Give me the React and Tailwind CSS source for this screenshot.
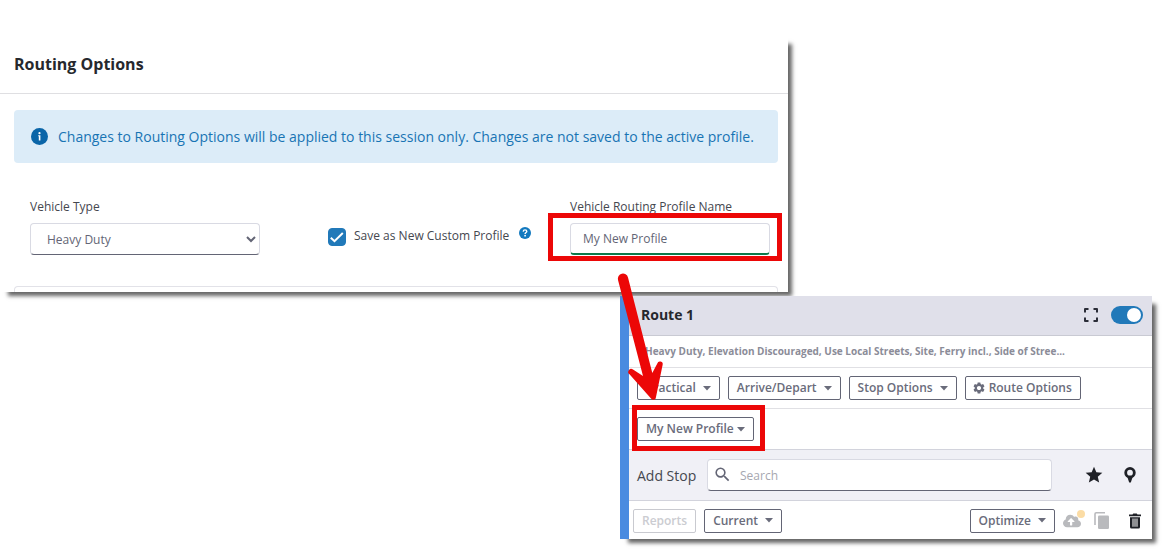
import React, { useState } from "react";
import { FaCloudUploadAlt } from "react-icons/fa";
import { MdSearch, MdSettings, MdStar } from "react-icons/md";

function OutlineButton({ children, caret, icon, disabled, tight }) {
  return (
    <button
      type="button"
      disabled={disabled}
      className={
        disabled
          ? "flex h-6 items-center rounded-xs border border-[#c9cad0] px-2 text-xs font-semibold whitespace-nowrap text-[#cbccd1]"
          : "flex h-6 items-center rounded-xs border border-[#636575] bg-white px-2 text-xs font-semibold whitespace-nowrap text-[#6a6c7b]"
      }
    >
      {icon}
      {children}
      {caret && <Caret tight={tight} />}
    </button>
  );
}

function Caret({ tight }) {
  return (
    <svg width="8" height="5" viewBox="0 0 8 5" className={tight ? "ml-[3px]" : "ml-[7px]"} aria-hidden="true">
      <path d="M0 0h8L4 4.500z" fill="currentColor" />
    </svg>
  );
}

function InfoIcon() {
  return (
    <svg width="17" height="17" viewBox="0 0 17 17" className="shrink-0" aria-hidden="true">
      <circle cx="8.5" cy="8.5" r="8.5" fill="#0a65a8" />
      <circle cx="8.5" cy="5.2" r="1.1" fill="#fff" />
      <path d="M7.200 7.200h2.200v5.300H7.800V8.300h-.6z" fill="#fff" />
    </svg>
  );
}

function HelpIcon() {
  return (
    <svg width="12" height="12" viewBox="0 0 12 12" aria-hidden="true">
      <circle cx="6" cy="6" r="6" fill="#1279bf" />
      <path d="M4.2 4.6C4.3 3.4 5 2.9 6 2.9s1.8.6 1.8 1.5C7.800 5.500 6.100 5.600 6.100 7" fill="none" stroke="#fff" strokeWidth="1.4" />
      <circle cx="6.100" cy="8.700" r=".9" fill="#fff" />
    </svg>
  );
}

function ExpandIcon() {
  return (
    <svg width="14" height="14" viewBox="0 0 14 14" fill="none" stroke="#2b2d38" strokeWidth="2" strokeLinejoin="round" aria-hidden="true">
      <path d="M1 4.500V1h3.500M9.500 1H13v3.500M13 9.500V13H9.500M4.500 13H1V9.500" />
    </svg>
  );
}

function PinIcon() {
  return (
    <svg width="12" height="16" viewBox="0 0 12 16" aria-hidden="true">
      <circle cx="6" cy="5.700" r="4.300" fill="none" stroke="#1f2127" strokeWidth="2.800" />
      <path d="M3.500 10.500h5L6.800 15.500H5.200z" fill="#1f2127" />
    </svg>
  );
}

function CopyIcon() {
  return (
    <svg width="15" height="17" viewBox="0 0 15 17" aria-hidden="true">
      <path d="M1 13V2a1.200 1.200 0 0 1 1.200-1.200H11" fill="none" stroke="#b9babd" strokeWidth="1.600" />
      <rect x="4" y="3.500" width="11" height="13.500" rx="1.300" fill="#b9babd" />
    </svg>
  );
}

function TrashIcon() {
  return (
    <svg width="12" height="16" viewBox="0 0 12 16" fill="#1f2127" aria-hidden="true">
      <path d="M0 1.500h3.500L4.300.5h3.400l.8 1H12v1.800H0z" />
      <path fillRule="evenodd" d="M1 4.200h10V14a1.500 1.500 0 0 1-1.500 1.500h-7A1.500 1.500 0 0 1 1 14zM3.500 5.500v8.300h1V5.500zM5.500 5.500v8.300h1V5.500zM7.500 5.500v8.300h1V5.500z" />
    </svg>
  );
}

// red arrow that links the profile name field with the profile button
function Arrow() {
  return (
    <svg
      width="48"
      height="132"
      viewBox="0 0 48 132"
      className="pointer-events-none absolute -top-6 -left-[9px] z-10 overflow-visible"
      aria-hidden="true"
    >
      <path
        d="M-2 8A5 5 0 0 1 8 5.500L32.300 101L37.300 91.500A2.700 2.700 0 0 1 42.600 93L36 125A2.700 2.700 0 0 1 31 126.500L9.500 102.300A2.800 2.800 0 0 1 13 97.500L23 104Z"
        fill="#ec0707"
      />
    </svg>
  );
}

function RoutingOptions() {
  const [saveProfile, setSaveProfile] = useState(true);
  const [profileName, setProfileName] = useState("My New Profile");

  return (
    <section className="w-full max-w-[788px] bg-white shadow-[6px_6px_4px_-2px_rgba(0,0,0,0.6)]">
      {/* Header */}
      <div className="border-b border-[#dfdfe2] px-3.5 pt-4 pb-[17px]">
        <h1 className="text-base leading-6 font-bold text-[#26282d]">Routing Options</h1>
      </div>

      {/* Notice */}
      <div className="mt-4 mr-2.5 ml-3.5 flex items-center gap-2.5 rounded-sm bg-[#dcecf8] px-[17px] py-4 text-sm leading-[21px] text-[#1874b4]">
        <InfoIcon />
        <p>
          Changes to Routing Options will be applied to this session only. Changes are not saved to the active profile.
        </p>
      </div>

      {/* Form */}
      <div className="mt-8 flex items-start pr-[18px] pl-[30px] text-xs text-[#45474f]">
        <div className="w-[230px]">
          <label htmlFor="vehicle-type" className="block leading-6">
            Vehicle Type
          </label>
          <select
            id="vehicle-type"
            className="mt-1 h-8 w-full rounded-sm border border-[#d9dae3] border-b-[#636575] bg-white px-3 text-[#636575]"
          >
            <option>Heavy Duty</option>
          </select>
        </div>

        <div className="mt-[26px] ml-[68px] flex h-8 items-center">
          <span className="relative flex">
            <input
              id="save-profile"
              type="checkbox"
              checked={saveProfile}
              onChange={(e) => setSaveProfile(e.target.checked)}
              className="h-[18px] w-[18px] appearance-none rounded-sm border border-[#2179b9] bg-white checked:bg-[#2179b9]"
            />
            {saveProfile && (
              <svg viewBox="0 0 18 18" className="pointer-events-none absolute inset-0" aria-hidden="true">
                <path d="M2.800 9.800l3.700 3.400L14.800 5" fill="none" stroke="#fff" strokeWidth="2" />
              </svg>
            )}
          </span>
          <label htmlFor="save-profile" className="mb-0.5 ml-2 whitespace-nowrap">
            Save as New Custom Profile
          </label>
          <button type="button" aria-label="Help" className="mb-2 ml-2.5">
            <HelpIcon />
          </button>
        </div>

        <div className="ml-auto w-[200px]">
          <label htmlFor="profile-name" className="block leading-6">
            Vehicle Routing Profile Name
          </label>
          <div className="relative mt-1">
            <input
              id="profile-name"
              type="text"
              value={profileName}
              onChange={(e) => setProfileName(e.target.value)}
              className="block h-8 w-full rounded-sm border border-b-2 border-[#d9dae3] border-b-[#0a7a4b] px-3 text-[#636575]"
            />
            <div className="pointer-events-none absolute -top-2.5 -right-3 -bottom-1.5 -left-[22px] border-5 border-[#ec0707]" />
          </div>
        </div>
      </div>

      {/* top edge of the next card */}
      <div className="mt-[31px] mr-2.5 ml-3.5 h-1.5 rounded-t-sm border border-b-0 border-[#e2e2e8]" />
    </section>
  );
}

function RoutePanel() {
  const [enabled, setEnabled] = useState(true);

  return (
    <section className="relative mt-1 mr-[15px] ml-auto w-full max-w-[532px] border-l-9 border-[#4a8be0] bg-white shadow-[6px_6px_4px_-2px_rgba(0,0,0,0.6)]">
      <Arrow />

      {/* Title */}
      <div className="flex h-10 items-center border-b border-[#c9cad3] bg-[#e0e0ea] pr-[9px] pb-px pl-3">
        <h2 className="text-sm font-bold text-[#26282d]">Route 1</h2>
        <button type="button" aria-label="Expand" className="ml-auto">
          <ExpandIcon />
        </button>
        <label className="relative ml-[13px] flex">
          <input
            type="checkbox"
            role="switch"
            aria-label="Show route"
            checked={enabled}
            onChange={(e) => setEnabled(e.target.checked)}
            className="peer h-[18px] w-8 appearance-none rounded-full bg-[#9a9ba5] checked:bg-[#2179b9]"
          />
          <span className="pointer-events-none absolute top-0.5 left-0.5 h-3.5 w-3.5 rounded-full bg-white peer-checked:left-4" />
        </label>
      </div>

      <p className="h-8 border-b border-[#e0e0e4] pl-4 text-[10px] leading-[31px] font-bold whitespace-nowrap text-[#8b8c98]">
        Heavy Duty, Elevation Discouraged, Use Local Streets, Site, Ferry incl., Side of Stree...
      </p>

      {/* Options */}
      <div className="flex h-[41px] items-center gap-2 border-b border-[#e0e0e4] px-2">
        <OutlineButton caret>Practical</OutlineButton>
        <OutlineButton caret>Arrive/Depart</OutlineButton>
        <OutlineButton caret>Stop Options</OutlineButton>
        <OutlineButton icon={<MdSettings size={14} className="-ml-0.5 mr-[3px]" />}>Route Options</OutlineButton>
      </div>

      <div className="flex h-10 items-center px-2">
        <div className="relative">
          <OutlineButton caret tight>
            My New Profile
          </OutlineButton>
          <div className="pointer-events-none absolute -top-3 -right-[11px] -bottom-2.5 -left-[5px] border-5 border-[#ec0707]" />
        </div>
      </div>

      {/* Add stop */}
      <div className="flex h-[52px] items-center border-y border-[#d2d3dc] bg-[#f0f0f6] pr-4 pl-2">
        <label htmlFor="stop-search" className="w-[70px] pt-0.5 text-sm whitespace-nowrap text-[#45474f]">
          Add Stop
        </label>
        <div className="relative w-[345px]">
          <MdSearch size={19} className="absolute top-1.5 left-1.5 text-[#636575]" />
          <input
            id="stop-search"
            type="text"
            placeholder="Search"
            className="block h-8 w-full rounded-sm border border-[#d9dae3] border-b-[#636575] bg-white pr-3 pl-8 text-xs placeholder:text-[#a6a7b0]"
          />
        </div>
        <button type="button" aria-label="Favorites" className="ml-auto text-[#1f2127]">
          <MdStar size={20} />
        </button>
        <button type="button" aria-label="Pick on map" className="ml-5">
          <PinIcon />
        </button>
      </div>

      {/* Footer */}
      <div className="flex h-[38px] items-center gap-2 pt-px pr-[11px] pl-1">
        <OutlineButton disabled>Reports</OutlineButton>
        <OutlineButton caret>Current</OutlineButton>
        <div className="ml-auto flex items-center">
          <OutlineButton caret>Optimize</OutlineButton>
          <button type="button" aria-label="Upload" className="relative ml-2 text-[#b9babd]">
            <FaCloudUploadAlt size={18} />
            <span className="absolute -top-0.5 -right-1 h-2 w-2 rounded-full bg-[#fbdca5]" />
          </button>
          <button type="button" aria-label="Copy" className="ml-[13px]">
            <CopyIcon />
          </button>
          <button type="button" aria-label="Delete" className="ml-5">
            <TrashIcon />
          </button>
        </div>
      </div>
    </section>
  );
}

export default function App() {
  return (
    <main className="min-h-screen overflow-x-hidden bg-white pt-9 pb-3 font-['Open_Sans','Noto_Sans',sans-serif]">
      <RoutingOptions />
      <RoutePanel />
    </main>
  );
}
